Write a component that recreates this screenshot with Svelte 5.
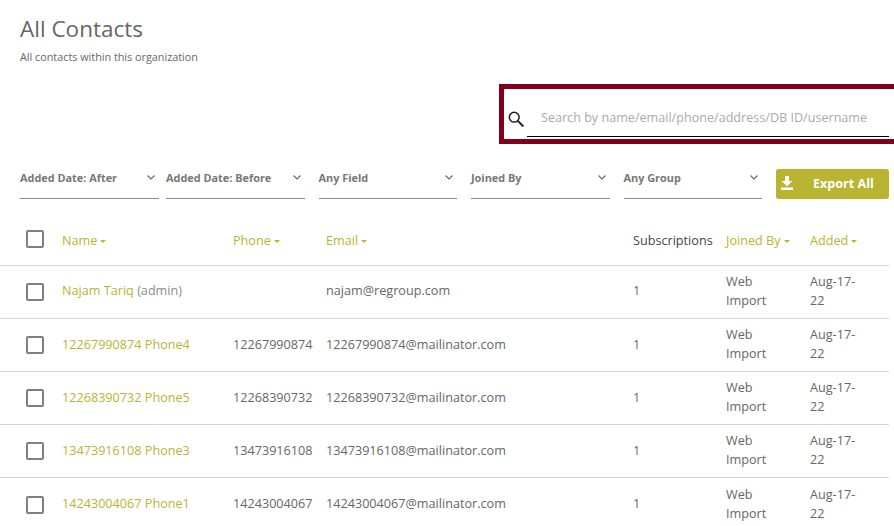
<script>
  const filters = ["Added Date: After", "Added Date: Before", "Any Field", "Joined By", "Any Group"];
  const rows = [
    { name: "Najam Tariq", admin: true, phone: "", email: "najam@regroup.com" },
    { name: "12267990874 Phone4", phone: "12267990874", email: "12267990874@mailinator.com" },
    { name: "12268390732 Phone5", phone: "12268390732", email: "12268390732@mailinator.com" },
    { name: "13473916108 Phone3", phone: "13473916108", email: "13473916108@mailinator.com" },
    { name: "14243004067 Phone1", phone: "14243004067", email: "14243004067@mailinator.com" }
  ];
</script>

<div class="page">
  <header class="head">
    <h1>All Contacts</h1>
    <p>All contacts within this organization</p>
  </header>

  <div class="search-wrap">
    <div class="search">
      <svg class="search-icon" width="16" height="16" viewBox="0 0 16 16" fill="none" stroke="#1a1a1a" stroke-width="1.5">
        <circle cx="6.2" cy="6.2" r="4.9" />
        <path d="M9.8 9.8l5.6 5.6" stroke-width="1.9" />
      </svg>
      <div class="search-input">Search by name/email/phone/address/DB ID/username</div>
    </div>
  </div>

  <div class="filters">
    {#each filters as f}
      <div class="filter">
        <span>{f}</span>
        <svg width="8" height="5" viewBox="0 0 8 5" fill="none" stroke="#666" stroke-width="1.1">
          <path d="M.5 .5l3.5 3.5 3.5-3.5" />
        </svg>
      </div>
    {/each}
    <button class="export" type="button">
      <svg width="12" height="14" viewBox="0 0 12 14" fill="#fff">
        <path d="M4 0h4v5h3.5L6 10.2.5 5H4zM0 11.6h12V14H0z" />
      </svg>
      <span>Export All</span>
    </button>
  </div>

  <div class="row header">
    <span class="box"></span>
    <span class="sort">Name<i></i></span>
    <span class="sort">Phone<i></i></span>
    <span class="sort">Email<i></i></span>
    <span class="subs">Subscriptions</span>
    <span class="sort">Joined By<i></i></span>
    <span class="sort">Added<i></i></span>
  </div>

  {#each rows as r, i}
    <div class="row" class:first={i === 0}>
      <span class="box"></span>
      <span class="name cell">{r.name}{#if r.admin}{" "}<em>(admin)</em>{/if}</span>
      <span class="cell">{r.phone}</span>
      <span class="cell">{r.email}</span>
      <span class="cell">1</span>
      <span class="wrap">Web Import</span>
      <span class="wrap">Aug-17-22</span>
    </div>
  {/each}
</div>

<style>
  :global(body) {
    background: #fff;
  }

  .page {
    height: 526px;
    overflow: hidden;
    font-family: "Open Sans", sans-serif;
    font-size: 12.65px;
    color: #666;
  }

  .head {
    padding: 13px 0 0 20px;
  }

  h1 {
    margin: 0;
    font-size: 22.5px;
    line-height: 32px;
    font-weight: 400;
    color: #666;
  }

  .head p {
    margin: 4px 0 0;
    font-size: 10.8px;
    line-height: 15px;
    color: #666;
  }

  .search-wrap {
    display: flex;
    justify-content: flex-end;
    margin-top: 20px;
  }

  .search {
    width: 395px;
    height: 60px;
    box-sizing: border-box;
    border: 5px solid #83001a;
    border-right: none;
    display: flex;
    align-items: flex-end;
    padding-left: 4px;
  }

  .search-icon {
    margin-bottom: 12px;
    flex: none;
  }

  .search-input {
    width: 362px;
    margin-left: 3px;
    margin-bottom: 2px;
    height: 30px;
    box-sizing: border-box;
    padding-left: 14px;
    border-bottom: 1px solid #000;
    line-height: 21px;
    font-size: 12.6px;
    color: #aaa;
    white-space: nowrap;
  }

  .filters {
    display: flex;
    align-items: flex-start;
    padding: 25px 5px 0 20px;
    height: 30px;
  }

  .filter {
    flex: none;
    width: 138.5px;
    height: 30px;
    box-sizing: border-box;
    border-bottom: 1px solid #888;
    margin-right: 14px;
    display: flex;
    justify-content: space-between;
    align-items: center;
    padding: 0 4px 13px 0;
    font-size: 10.9px;
    font-weight: 700;
    color: #777;
    white-space: nowrap;
  }

  .filter:first-child {
    margin-right: 7.5px;
  }

  .export {
    flex: none;
    width: 113px;
    height: 30px;
    box-sizing: border-box;
    border: none;
    border-radius: 3px;
    background: #b9b431;
    color: #fff;
    font: 700 12.6px "Open Sans", sans-serif;
    display: flex;
    align-items: center;
    padding: 0 0 2px 5px;
  }

  .export span {
    margin-left: 20px;
  }

  .row {
    display: grid;
    grid-template-columns: 36px 171px 93px 307px 93px 84px 1fr;
    align-items: center;
    height: 53px;
    width: 889px;
    box-sizing: border-box;
    padding-left: 26px;
    padding-bottom: 2px;
    border-bottom: 1px solid #d5d5d5;
    line-height: 19px;
  }

  .row.header {
    height: 67px;
    padding-top: 16px;
    padding-bottom: 0;
  }

  .row:last-child {
    border-bottom: none;
  }

  .first .cell {
    margin-bottom: 2px;
  }

  .box {
    width: 18px;
    height: 18px;
    margin-top: 2px;
    box-sizing: border-box;
    border: 2px solid #808080;
    border-radius: 2px;
  }

  .header .box {
    margin-top: -2px;
  }

  .sort,
  .name {
    color: #b9b431;
    white-space: nowrap;
  }

  .sort i {
    display: inline-block;
    margin-left: 3px;
    vertical-align: middle;
    border-left: 3px solid transparent;
    border-right: 3px solid transparent;
    border-top: 3px solid #b9b431;
  }

  .name em {
    font-style: normal;
    color: #8c8c8c;
  }

  .subs {
    color: #444;
    white-space: nowrap;
  }

  .wrap {
    width: 50px;
  }
</style>
